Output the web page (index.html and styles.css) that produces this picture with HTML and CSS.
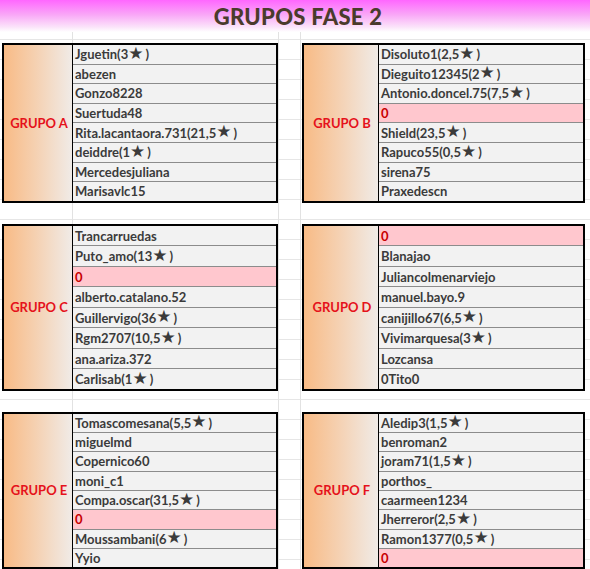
FILE: index.html
```html
<!DOCTYPE html>
<html lang="es">
<head>
<meta charset="utf-8">
<title>Grupos Fase 2</title>
<link rel="stylesheet" href="styles.css">
</head>
<body>
<header class="title">GRUPOS FASE 2</header>
<main class="sheet">
  <section class="grp narrow rows-a">
    <div class="label">GRUPO A</div>
    <ul class="names">
      <li>Jguetin(3<span class="star">★</span>)</li>
      <li>abezen</li>
      <li>Gonzo8228</li>
      <li>Suertuda48</li>
      <li>Rita.lacantaora.731(21,5<span class="star">★</span>)</li>
      <li>deiddre(1<span class="star">★</span>)</li>
      <li>Mercedesjuliana</li>
      <li>Marisavlc15</li>
    </ul>
  </section>
  <section class="grp wide rows-a">
    <div class="label">GRUPO B</div>
    <ul class="names">
      <li>Disoluto1(2,5<span class="star">★</span>)</li>
      <li>Dieguito12345(2<span class="star">★</span>)</li>
      <li>Antonio.doncel.75(7,5<span class="star">★</span>)</li>
      <li class="empty">0</li>
      <li>Shield(23,5<span class="star">★</span>)</li>
      <li>Rapuco55(0,5<span class="star">★</span>)</li>
      <li>sirena75</li>
      <li>Praxedescn</li>
    </ul>
  </section>
  <section class="grp narrow rows-c">
    <div class="label">GRUPO C</div>
    <ul class="names">
      <li>Trancarruedas</li>
      <li>Puto_amo(13<span class="star">★</span>)</li>
      <li class="empty">0</li>
      <li>alberto.catalano.52</li>
      <li>Guillervigo(36<span class="star">★</span>)</li>
      <li>Rgm2707(10,5<span class="star">★</span>)</li>
      <li>ana.ariza.372</li>
      <li>Carlisab(1<span class="star">★</span>)</li>
    </ul>
  </section>
  <section class="grp wide rows-c">
    <div class="label">GRUPO D</div>
    <ul class="names">
      <li class="empty">0</li>
      <li>Blanajao</li>
      <li>Juliancolmenarviejo</li>
      <li>manuel.bayo.9</li>
      <li>canijillo67(6,5<span class="star">★</span>)</li>
      <li>Vivimarquesa(3<span class="star">★</span>)</li>
      <li>Lozcansa</li>
      <li>0Tito0</li>
    </ul>
  </section>
  <section class="grp narrow rows-e">
    <div class="label">GRUPO E</div>
    <ul class="names">
      <li>Tomascomesana(5,5<span class="star">★</span>)</li>
      <li>miguelmd</li>
      <li>Copernico60</li>
      <li>moni_c1</li>
      <li>Compa.oscar(31,5<span class="star">★</span>)</li>
      <li class="empty">0</li>
      <li>Moussambani(6<span class="star">★</span>)</li>
      <li>Yyio</li>
    </ul>
  </section>
  <section class="grp wide rows-e">
    <div class="label">GRUPO F</div>
    <ul class="names">
      <li>Aledip3(1,5<span class="star">★</span>)</li>
      <li>benroman2</li>
      <li>joram71(1,5<span class="star">★</span>)</li>
      <li>porthos_</li>
      <li>caarmeen1234</li>
      <li>Jherreror(2,5<span class="star">★</span>)</li>
      <li>Ramon1377(0,5<span class="star">★</span>)</li>
      <li class="empty">0</li>
    </ul>
  </section>
</main>
</body>
</html>
```
FILE: styles.css
```css
html, body {
  margin: 0;
  padding: 0;
}
body {
  width: 590px;
  height: 569px;
  overflow: hidden;
  background-color: #ffffff;
  background-image:
    linear-gradient(to right, transparent 72px, #e2e2e2 72px, #e2e2e2 73px, transparent 73px,
      transparent 278px, #e2e2e2 278px, #e2e2e2 279px, transparent 279px,
      transparent 300px, #e2e2e2 300px, #e2e2e2 301px, transparent 301px),
    repeating-linear-gradient(to bottom, transparent 0, transparent 19px, #e6e6e6 19px, #e6e6e6 20px);
  font-family: "Lato", "DejaVu Sans", sans-serif;
}
.title {
  height: 32px;
  box-sizing: border-box;
  padding-top: 3px;
  padding-left: 6px;
  text-align: center;
  font-size: 22px;
  font-weight: 900;
  color: #4a3b2c;
  background: linear-gradient(to bottom, #ff66ff 0%, #f9a6f7 45%, #fbe4fa 85%, #ffffff 100%);
  letter-spacing: 0.3px;
}
.sheet {
  display: grid;
  grid-template-columns: 276px 283px;
  column-gap: 24px;
  row-gap: 21px;
  padding: 11px 0 0 2px;
}
.grp {
  display: grid;
  border: 2px solid #000;
  background: #f2f2f2;
}
.grp.narrow { grid-template-columns: 69px 1fr; }
.grp.wide { grid-template-columns: 75px 1fr; }
.label {
  display: flex;
  align-items: center;
  justify-content: center;
  border-right: 1px solid #000;
  background: linear-gradient(to right, #f8bb86 0%, #f5d0b0 45%, #f0ebe7 100%);
  color: #e5121b;
  font-weight: 700;
  font-size: 13px;
  padding-left: 2px;
}
.names {
  list-style: none;
  margin: 0;
  padding: 0;
}
.names li {
  box-sizing: border-box;
  border-top: 1px solid #8c8c8c;
  padding-left: 2px;
  font-size: 13px;
  font-weight: 700;
  color: #3b3b3b;
  display: flex;
  align-items: center;
  white-space: nowrap;
}
.names li:first-child { border-top: none; }
.rows-a .names li { height: 19.6px; }
.rows-a .names li:first-child { height: 18.6px; }
.rows-c .names li { height: 20.5px; }
.rows-c .names li:first-child { height: 19.5px; }
.rows-e .names li { height: 19.3px; }
.rows-e .names li:first-child { height: 18.3px; }
.names li.empty {
  background: #ffc7ce;
  color: #c80000;
}
.star {
  font-family: "DejaVu Sans", sans-serif;
  font-size: 17px;
  line-height: 1;
  margin: -2px 2px 0 0;
  color: #3b3b3b;
}
```
